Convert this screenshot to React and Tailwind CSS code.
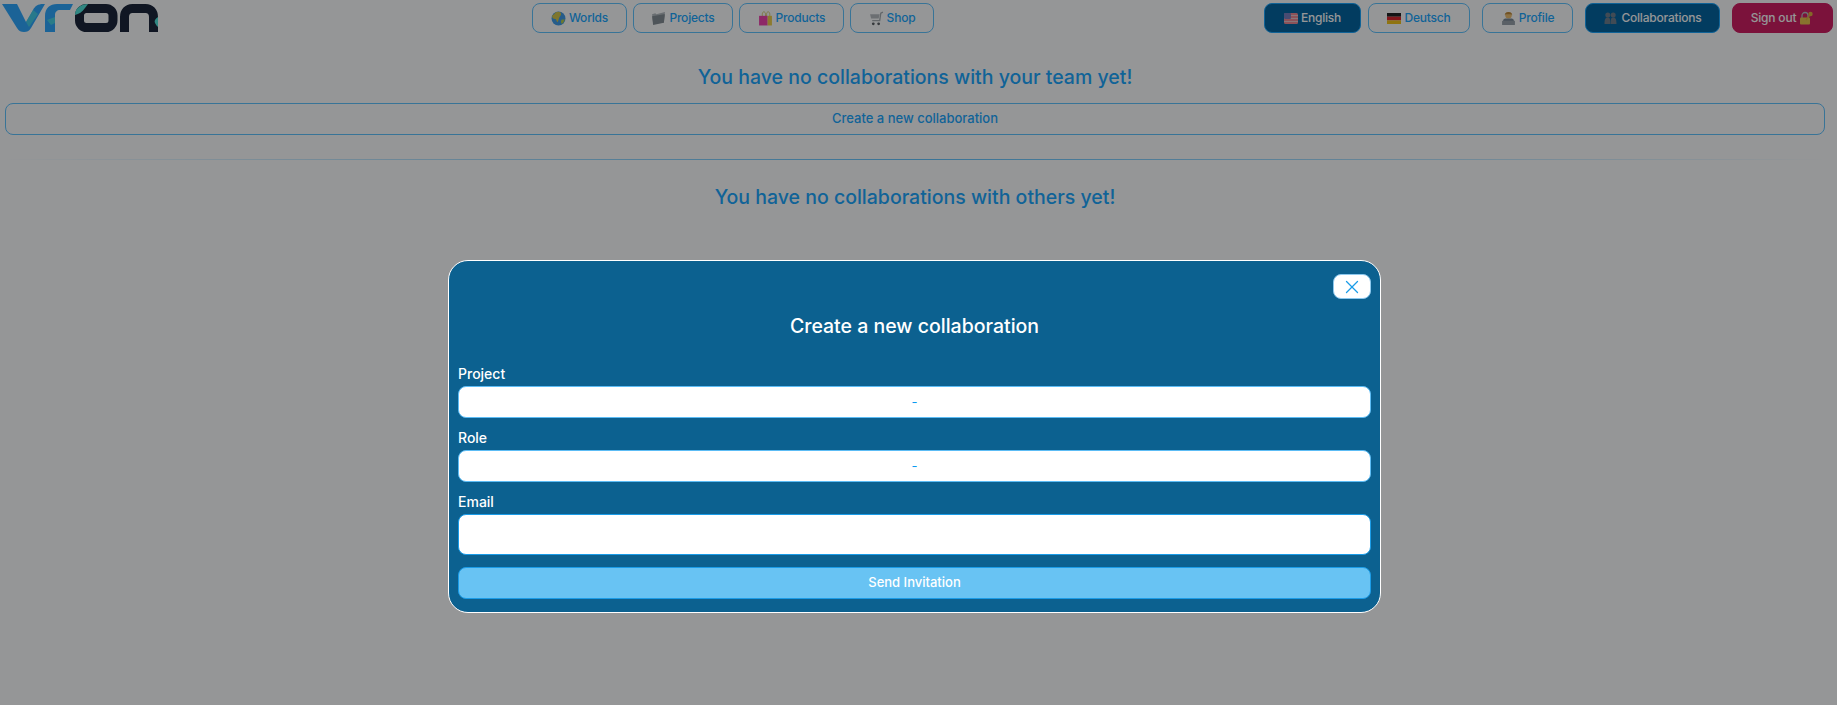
import { X } from 'lucide-react'

const font = { fontFamily: 'Inter, "Noto Sans", sans-serif' }

function Logo() {
  return (
    <svg width="160" height="36" viewBox="0 0 160 36" className="shrink-0">
      <path d="M2 4h15l9 18 7-12c2-4 5-6 10-6h2l-14 24c-2 3-4 4-7 4-3 0-5-1-7-4z" fill="#2da8ff" />
      <path d="M33 10l5 4c-3 4-6 9-9 13l-3-5z" fill="#52e6dc" opacity="0.6" />
      <path d="M45 32V16c0-8 5-12 12-12h16l-3 6H60c-3 0-5 2-5 5v17z" fill="#2da8ff" />
      <path d="M47 20l8-3v6l-4 2z" fill="#52e6dc" opacity="0.7" />
      <rect x="79.500" y="8.500" width="33.500" height="19" rx="7" fill="none" stroke="#1a2437" strokeWidth="9" />
      <path d="M75 15c0-7 6-11 13-11l-3 4c-3 4-6 6-10 7z" fill="#52e6dc" />
      <path d="M124.500 32V17c0-5 3-8.500 8-8.500h13c5 0 8 3.500 8 8.500v15" fill="none" stroke="#1a2437" strokeWidth="9" />
      <path d="M158 17c-3 2-4 4-3 6 1 2 2 3 3 4z" fill="#52e6dc" />
    </svg>
  )
}

function Globe() {
  return (
    <svg width="15" height="15" viewBox="0 0 14 14">
      <circle cx="7" cy="7" r="6.500" fill="#3f9be8" />
      <path d="M4 1.500c2-1 4-1 5 0 1 2 0 3-1 4-1 2-1 4-2 5-1-1-1-3-2-3-2 0-3-1-3-3 1-1 2-1 3-3z" fill="#d8c84a" />
      <path d="M10 8c1 0 2 0 3 0-1 2-2 4-3 4-1-1-1-3 0-4z" fill="#b7cc4c" />
    </svg>
  )
}

function Folder() {
  return (
    <svg width="15" height="15" viewBox="0 0 14 14">
      <path d="M1 3l3-1 1 1 8-2-1 10H2z" fill="#b4babf" />
      <path d="M1 5l11-2 1 0-1 8-10 2z" fill="#868e94" />
    </svg>
  )
}

function Bag() {
  return (
    <svg width="15" height="15" viewBox="0 0 14 14">
      <path d="M4 5V3c0-3 3-3 3 0v2M8 5V3c0-3 3-3 3 0v2" fill="none" stroke="#d9cf70" strokeWidth="0.900" />
      <rect x="1" y="4.500" width="8" height="9" fill="#f242ad" />
      <rect x="9" y="4.500" width="4" height="9" fill="#f2cf4a" />
    </svg>
  )
}

function Cart() {
  return (
    <svg width="15" height="15" viewBox="0 0 14 14">
      <path d="M13 1l-2 1-1 7H3" fill="none" stroke="#a8acb0" strokeWidth="1.200" />
      <path d="M1 3h9l-1 4H2z" fill="#b8bcc0" />
      <circle cx="4" cy="12" r="1.300" fill="#5c6064" />
      <circle cx="9" cy="12" r="1.300" fill="#5c6064" />
    </svg>
  )
}

function FlagUs() {
  return (
    <svg width="14" height="11" viewBox="0 0 14 11">
      <rect width="14" height="11" rx="1.500" fill="#f08a94" />
      <path d="M0 2.500h14M0 5.500h14M0 8.500h14" stroke="#e8c8cc" strokeWidth="1" />
      <rect width="7" height="6" rx="1" fill="#7a7fc0" />
    </svg>
  )
}

function FlagDe() {
  return (
    <svg width="14" height="11" viewBox="0 0 14 11">
      <rect width="14" height="3.700" fill="#222" />
      <rect y="3.700" width="14" height="3.700" fill="#e0252b" />
      <rect y="7.400" width="14" height="3.600" fill="#f5c518" />
    </svg>
  )
}

function Person() {
  return (
    <svg width="15" height="15" viewBox="0 0 14 14">
      <circle cx="7" cy="4" r="3" fill="#f0bf70" />
      <path d="M3.500 4c0-4 7-4 7 0l-1-1h-5z" fill="#c08a3a" />
      <path d="M2 9c0-2 2-2 5-2s5 0 5 2v2H2z" fill="#7d8a96" />
      <rect x="1" y="9" width="12" height="4" rx="0.500" fill="#9aa3ab" />
    </svg>
  )
}

function People() {
  return (
    <svg width="15" height="14" viewBox="0 0 14 14" fill="#6f7f8d">
      <circle cx="4.300" cy="4" r="2.500" />
      <circle cx="9.700" cy="4" r="2.500" />
      <path d="M1 13c0-5 1-6.500 3.300-6.500S6.800 8 6.800 13zM7.200 13c0-5 .2-6.500 2.500-6.500S13 8 13 13z" />
    </svg>
  )
}

function Lock() {
  return (
    <svg width="15" height="14" viewBox="0 0 15 14">
      <path d="M3 7V4.500a3 3 0 0 1 6 0V7" fill="none" stroke="#b9bdc0" strokeWidth="1.300" />
      <rect x="1" y="6.500" width="10" height="7" rx="1" fill="#e8c34a" />
      <circle cx="11.500" cy="3" r="2.200" fill="#e0b040" />
      <path d="M10.500 4.500L7 9" stroke="#e0b040" strokeWidth="1.300" />
    </svg>
  )
}

function NavButton({ icon, label, className }) {
  return (
    <button className={`h-[30px] flex items-center justify-center gap-[3px] rounded-lg border text-[12px] font-medium tracking-[-0.2px] ${className}`}>
      {icon}
      <span>{label}</span>
    </button>
  )
}

const outline = 'border-[#60c4ff] text-[#1ba8ff]'
const active = 'border-[#1ba8ff] bg-[#0364a0] text-white'

function Field({ label, children }) {
  return (
    <div>
      <label className="block text-[14px] font-medium text-white leading-[19px] mb-[3px]">{label}</label>
      {children}
    </div>
  )
}

export default function App() {
  return (
    <div className="relative h-[705px] overflow-hidden bg-white" style={font}>
      <nav className="flex items-start h-[42px]">
        <Logo />
        <div className="flex gap-[6px] ml-[372px] mt-[3px]">
          <NavButton icon={<Globe />} label="Worlds" className={`w-[95px] ${outline}`} />
          <NavButton icon={<Folder />} label="Projects" className={`w-[100px] ${outline}`} />
          <NavButton icon={<Bag />} label="Products" className={`w-[105px] ${outline}`} />
          <NavButton icon={<Cart />} label="Shop" className={`w-[84px] ${outline}`} />
        </div>
        <div className="flex ml-auto mr-[4px] mt-[3px]">
          <NavButton icon={<FlagUs />} label="English" className={`w-[97px] ${active}`} />
          <NavButton icon={<FlagDe />} label="Deutsch" className={`w-[102px] ml-[7px] ${outline}`} />
          <NavButton icon={<Person />} label="Profile" className={`w-[91px] ml-[12px] ${outline}`} />
          <NavButton icon={<People />} label="Collaborations" className={`w-[135px] ml-[12px] ${active}`} />
          <NavButton icon={null} label={<span className="flex items-center gap-[3px]">Sign out <Lock /></span>} className="w-[101px] ml-[12px] border-[#d31c61] bg-[#d31c61] text-white" />
        </div>
      </nav>

      <main className="w-[1830px] px-[5px] text-center text-[#1ba8ff]">
        <h2 className="text-[19.500px] font-medium leading-[30px] mt-[20px]">You have no collaborations with your team yet!</h2>
        <button className="block w-full h-[32px] mt-[11px] pb-[1px] rounded-lg border border-[#60c4ff] text-[13px] font-medium">
          Create a new collaboration
        </button>
        <div className="h-px mt-[24px] bg-linear-to-r from-transparent via-[#60c4ff] to-transparent" />
        <h2 className="text-[19.500px] font-medium leading-[30px] mt-[22px]">You have no collaborations with others yet!</h2>
      </main>

      <div className="absolute inset-0 bg-[#020408]/42">
        <div className="w-[933px] h-[353px] ml-[448px] mt-[260px] rounded-[20px] border border-white bg-[#0c6190] px-[9px] pt-[13px]">
          <div className="flex justify-end">
            <button className="w-[38px] h-[25px] flex items-center justify-center rounded-lg bg-white border border-[#8cc8ee] text-[#1a9ce8]">
              <X size={22} strokeWidth={1.400} />
            </button>
          </div>
          <h3 className="text-center text-white text-[19.500px] font-medium leading-[26px] mt-[14px]">Create a new collaboration</h3>
          <div className="mt-[25px] flex flex-col gap-[10px]">
            <Field label="Project">
              <div className="h-[32px] pt-[1px] flex items-center justify-center rounded-lg bg-white border border-[#5cbcf5] text-[#0a9bf0] text-[13px]">-</div>
            </Field>
            <Field label="Role">
              <div className="h-[32px] pt-[1px] flex items-center justify-center rounded-lg bg-white border border-[#5cbcf5] text-[#0a9bf0] text-[13px]">-</div>
            </Field>
            <Field label="Email">
              <input className="block w-full h-[41px] rounded-lg bg-white border border-[#1a9ce8]" />
            </Field>
          </div>
          <button className="block w-full h-[32px] mt-[12px] pb-[1px] rounded-lg bg-[#68c3f3] border border-[#1a9ce8] text-white text-[13px] font-medium">
            Send Invitation
          </button>
        </div>
      </div>
    </div>
  )
}
